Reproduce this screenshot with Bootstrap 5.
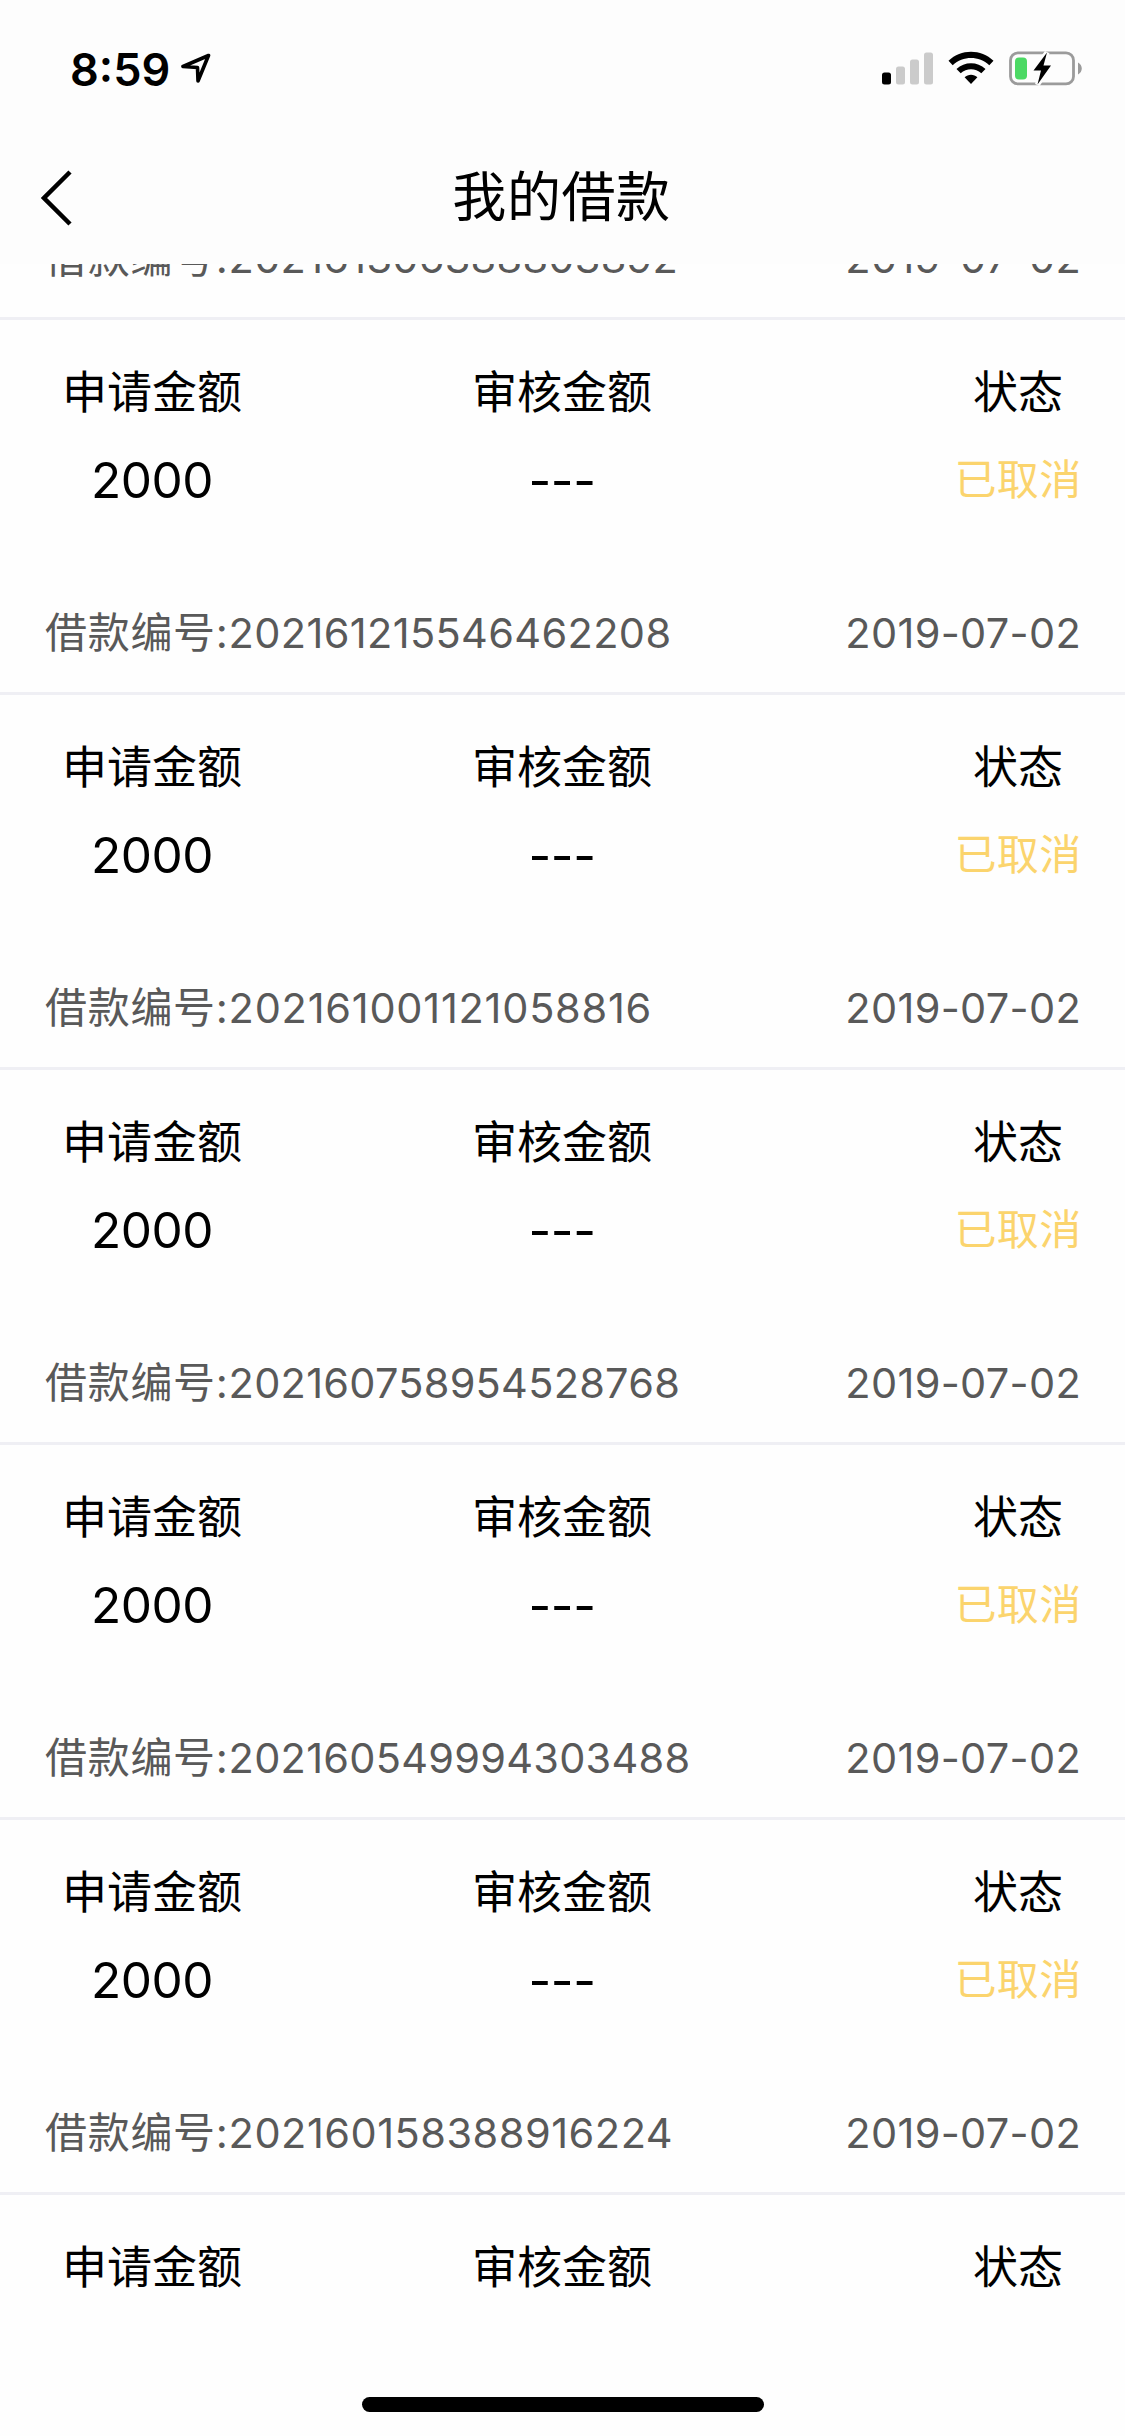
<!DOCTYPE html>
<html lang="zh-CN">
<head>
<meta charset="utf-8">
<meta name="viewport" content="width=device-width, initial-scale=1">
<title>我的借款</title>
<link rel="stylesheet" href="https://cdn.jsdelivr.net/npm/bootstrap@5.3.0/dist/css/bootstrap.min.css">
<style>
body{font-family:Inter,"Noto Sans CJK SC",sans-serif;background:#fefefe;color:#000;}
.screen{width:1125px;height:2436px;overflow:hidden;}
.topbar{height:264px;background:#fdfdfd;}
.statusbar{height:132px;padding:6px 43px 0 70px;}
.clock{font-size:45px;font-weight:600;line-height:1;letter-spacing:0;margin-right:11px;}
.navrow{height:132px;display:grid;grid-template-columns:200px 1fr 200px;}
.back{margin-left:41px;}
.page-title{font-size:54px;letter-spacing:.6px;font-weight:400;line-height:80px;padding-right:2px;}
.loans{flex:1 1 0;}
.loan-track{margin-top:-72px;}
.loan{height:375px;}
.loan-head{height:128px;border-bottom:3px solid #efeff4;padding:36px 44px 0 45px;font-size:41.5px;letter-spacing:.3px;line-height:60px;color:#595959;}
.no-label{font-size:42px;letter-spacing:.7px;}
.loan-cols{padding:43px 0 0;display:grid;grid-template-columns:304px 516px 1fr;text-align:center;}
.lbl{font-size:45px;line-height:60px;}
.val{font-size:49.5px;letter-spacing:-.5px;line-height:60px;margin-top:27px;}
.state{font-size:42px;letter-spacing:.4px;color:#fbd46d;}
.last-col{padding-left:91px;}
.homebar{width:402px;height:15px;border-radius:8px;background:#000;margin-bottom:24px;}
</style>
</head>
<body>
<div class="screen d-flex flex-column">
  <header class="topbar">
    <div class="statusbar d-flex align-items-center justify-content-between">
      <div class="d-flex align-items-center">
        <span class="clock">8:59</span>
        <svg width="30" height="32" viewBox="0 0 30 32" fill="none" stroke="#000" stroke-width="3.6" stroke-linejoin="round"><path d="M27.5 2.5 2 13.5 16.5 14.5 17 28Z"/></svg>
      </div>
      <svg width="200" height="36" viewBox="0 0 200 36">
        <rect x="0" y="21.500" width="9" height="12" rx="2.500"/>
        <g fill="#cbcbcb"><rect x="14" y="15.500" width="9" height="18" rx="2.500"/><rect x="28" y="8.500" width="9" height="25" rx="2.500"/><rect x="42" y="1.500" width="9" height="32" rx="2.500"/></g>
        <path d="M66.500 9.800C79 -2.200 99 -2.200 111.500 9.800L107.300 14.200C97 4.700 81 4.700 70.700 14.200Z"/>
        <path d="M74.500 18C82.500 10.300 95.500 10.300 103.500 18L99.300 22.300C93.500 17 84.500 17 78.700 22.300Z"/>
        <path d="M82.600 26.200C86 22.800 92 22.800 95.400 26.200L89 33Z"/>
        <rect x="128.500" y="1.900" width="63" height="31" rx="7.500" fill="none" stroke="#9b9b9b" stroke-width="2.800"/>
        <path d="M196 11.500C201 14 201 21 196 23.500Z" fill="#9b9b9b"/>
        <rect x="133" y="6.500" width="12" height="22" rx="4" fill="#4cd964"/>
        <path d="M165 1.500 151.500 19.500H159L155.500 33.500 169 14.500H161.500Z" stroke="#fdfdfd" stroke-width="5"/>
        <path d="M165 1.500 151.500 19.500H159L155.500 33.500 169 14.500H161.500Z"/>
      </svg>
    </div>
    <div class="navrow align-items-center">
      <svg class="back" width="34" height="60" viewBox="0 0 34 60" fill="none" stroke="#000" stroke-width="4.500"><path d="M29 4 3 30 29 56"/></svg>
      <h1 class="page-title text-center m-0">我的借款</h1>
    </div>
  </header>
  <main class="loans overflow-hidden"><div class="loan-track" id="loans"></div></main>
  <footer class="d-flex justify-content-center"><div class="homebar"></div></footer>
</div>
<script>
// [loan number, tracking in px]; numbers with many 1s are set slightly looser
const loans = [["202161306388803892", .25], ["202161215546462208", .35], ["202161001121058816", .75], ["202160758954528768", .25], ["202160549994303488", .25], ["202160158388916224", .5]];
document.getElementById("loans").innerHTML = loans.map(([no, track], i) => `
  <section class="loan">
    <div class="loan-head d-flex justify-content-between"><div><span class="no-label">借款编号:</span><span style="letter-spacing:${track}px">${no}</span></div><span>2019-07-02</span></div>
    <div class="loan-cols">
      <div><div class="lbl">申请金额</div>${i < 5 ? '<div class="val">2000</div>' : ''}</div>
      <div><div class="lbl">审核金额</div>${i < 5 ? '<div class="val">---</div>' : ''}</div>
      <div class="last-col"><div class="lbl">状态</div>${i < 5 ? '<div class="val state">已取消</div>' : ''}</div>
    </div>
  </section>`).join("");
</script>
<script src="https://cdn.jsdelivr.net/npm/bootstrap@5.3.0/dist/js/bootstrap.bundle.min.js"></script>
</body>
</html>
